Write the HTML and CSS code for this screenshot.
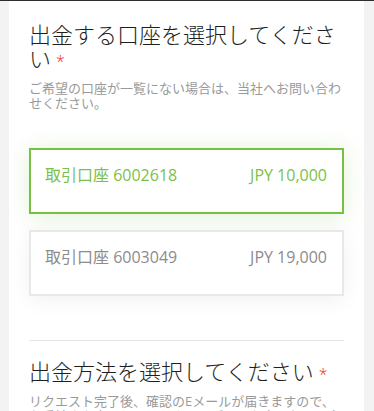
FILE: index.html
```html
<!DOCTYPE html>
<html lang="ja">
<head>
    <meta charset="UTF-8">
    <meta name="viewport" content="width=device-width, initial-scale=1.0">
    <title>出金</title>
    <link rel="stylesheet" href="styles.css">
</head>
<body>
    <div class="panel">
        <!-- 出金口座 -->
        <section class="field">
            <h2 class="field-title">出金する口座を選択してください<span class="required">*</span></h2>
            <p class="field-note">ご希望の口座が一覧にない場合は、当社へお問い合わせください。</p>

            <div class="account-list">
                <div class="account selected">
                    <span>取引口座 6002618</span>
                    <span>JPY 10,000</span>
                </div>
                <div class="account">
                    <span>取引口座 6003049</span>
                    <span>JPY 19,000</span>
                </div>
            </div>
        </section>

        <hr class="divider">

        <!-- 出金方法 -->
        <section class="field">
            <h2 class="field-title">出金方法を選択してください<span class="required">*</span></h2>
            <p class="field-note">リクエスト完了後、確認のEメールが届きますので、お手続きを完了してください。ご不明な点はお問い合わせください。</p>
        </section>
    </div>
</body>
</html>
```

FILE: styles.css
```css
* {
    margin: 0;
    padding: 0;
    box-sizing: border-box;
}

body {
    font-family: "Open Sans", "Noto Sans CJK JP", sans-serif;
    background: #f3f3f3;
    border-top: 1px solid #2e2e2e;
    height: 100vh;
    overflow: hidden;
}

.panel {
    margin: 0 10px 0 9px;
    background: white;
    padding: 21px 20px 0;
    height: 100%;
}

.field-title {
    font-size: 22px;
    font-weight: 300;
    line-height: 24px;
    color: #1e1e1e;
}

.required {
    font-size: 16px;
    line-height: 1;
    color: #f2262b;
    margin-left: 5px;
}

.field-note {
    margin-top: 11px;
    font-size: 13px;
    line-height: 15px;
    color: #9a9a9a;
}

.account-list {
    margin-top: 37px;
    display: flex;
    flex-direction: column;
    gap: 16px;
}

.account {
    height: 66px;
    border: 2px solid #e8e8e8;
    padding: 14px 15px 0 14px;
    display: flex;
    justify-content: space-between;
    align-items: flex-start;
    font-size: 16px;
    line-height: 22px;
    color: #8c8c8c;
    background: white;
    box-shadow: 0 4px 22px rgba(0,0,0,0.06);
}

.account.selected {
    border-color: #77c043;
    color: #7cbf4a;
    box-shadow: 0 2px 22px rgba(119,192,67,0.22);
}

.divider {
    margin-top: 44px;
    border: none;
    border-top: 1px solid #e4e4e4;
}

.divider + .field {
    margin-top: 18px;
}
```
